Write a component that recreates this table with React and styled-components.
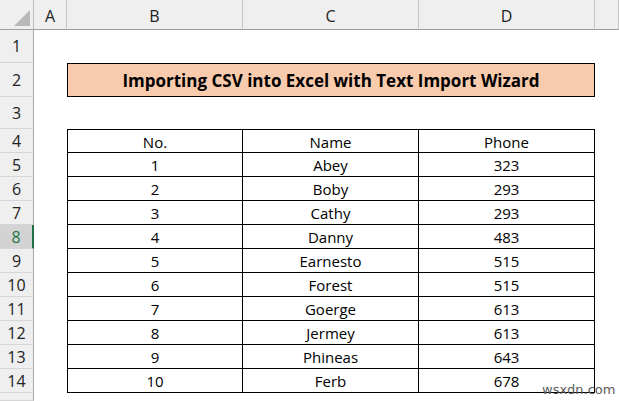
import React from "react";
import styled, { createGlobalStyle } from "styled-components";

const Global = createGlobalStyle`
  html, body { margin: 0; padding: 0; background: #fff; overflow: hidden; }
  body { font-family: "Open Sans", "Liberation Sans", sans-serif; }
`;

const Sheet = styled.div`
  position: relative;
  width: 619px;
  height: 401px;
  display: grid;
  grid-template-columns: 34px 33px 176px 176px 176px 1fr;
  grid-template-rows: 30px 33px 34px 32px repeat(11, 24px) 1fr;
  overflow: hidden;
  background: #fff;
`;

const Corner = styled.div`
  position: relative;
  background: #efefef;
  border-right: 1px solid #bdbdbd;
  border-bottom: 1px solid #9e9e9e;
  &::after {
    content: "";
    position: absolute;
    right: 3px;
    bottom: 3px;
    width: 0;
    height: 0;
    border-left: 16px solid transparent;
    border-bottom: 16px solid #b9b9b9;
  }
`;

const ColHead = styled.div`
  background: #efefef;
  border-right: 1px solid #c4c4c4;
  border-bottom: 1px solid #9e9e9e;
  display: flex;
  align-items: center;
  justify-content: center;
  font-size: 16px;
  color: #222;
  padding-top: 2px;
  box-sizing: border-box;
`;

const RowHead = styled.div`
  background: ${(p) => (p.$active ? "#d3d3d3" : "#efefef")};
  color: ${(p) => (p.$active ? "#217346" : "#222")};
  border-bottom: 1px solid #d6d6d6;
  border-right: ${(p) => (p.$active ? "2px solid #217346" : "1px solid #a8a8a8")};
  display: flex;
  align-items: center;
  justify-content: center;
  font-size: 16px;
  box-sizing: border-box;
  grid-column: 1;
`;

const Blank = styled.div``;

const Title = styled.div`
  grid-column: 3 / 6;
  background: #f8cbad;
  border: 1px solid #000;
  display: flex;
  align-items: center;
  justify-content: center;
  font-weight: 700;
  font-size: 17px;
  color: #000;
  box-sizing: border-box;
  padding-top: 1px;
`;

const Cell = styled.div`
  border-right: 1px solid #000;
  border-bottom: 1px solid #000;
  border-left: ${(p) => (p.$first ? "1px solid #000" : "none")};
  border-top: ${(p) => (p.$top ? "1px solid #000" : "none")};
  display: flex;
  align-items: center;
  justify-content: center;
  font-size: 15px;
  color: #000;
  box-sizing: border-box;
  margin-top: ${(p) => (p.$top ? "0" : "-1px")};
  padding-top: 1px;
`;

const Watermark = styled.div`
  position: absolute;
  left: 542px;
  top: 382px;
  font-family: "DejaVu Sans", "Liberation Sans", sans-serif;
  font-size: 13px;
  color: #5a5a5a;
`;

const rows = [
  ["No.", "Name", "Phone"],
  ["1", "Abey", "323"],
  ["2", "Boby", "293"],
  ["3", "Cathy", "293"],
  ["4", "Danny", "483"],
  ["5", "Earnesto", "515"],
  ["6", "Forest", "515"],
  ["7", "Goerge", "613"],
  ["8", "Jermey", "613"],
  ["9", "Phineas", "643"],
  ["10", "Ferb", "678"],
];

export default function App() {
  return (
    <>
      <Global />
      <Sheet>
        <Corner />
        {["A", "B", "C", "D", ""].map((c, i) => (
          <ColHead key={i}>{c}</ColHead>
        ))}

        <RowHead>1</RowHead>
        <Blank style={{ gridColumn: "2 / 7" }} />

        <RowHead>2</RowHead>
        <Blank />
        <Title>Importing CSV into Excel with Text Import Wizard</Title>
        <Blank />

        <RowHead>3</RowHead>
        <Blank style={{ gridColumn: "2 / 7" }} />

        {rows.map((r, i) => (
          <React.Fragment key={i}>
            <RowHead $active={i + 4 === 8}>{i + 4}</RowHead>
            <Blank />
            {r.map((v, j) => (
              <Cell key={j} $first={j === 0} $top={i === 0}>
                {v}
              </Cell>
            ))}
            <Blank />
          </React.Fragment>
        ))}

        <RowHead />
        <Blank style={{ gridColumn: "2 / 7" }} />
        <Watermark>wsxdn.com</Watermark>
      </Sheet>
    </>
  );
}
